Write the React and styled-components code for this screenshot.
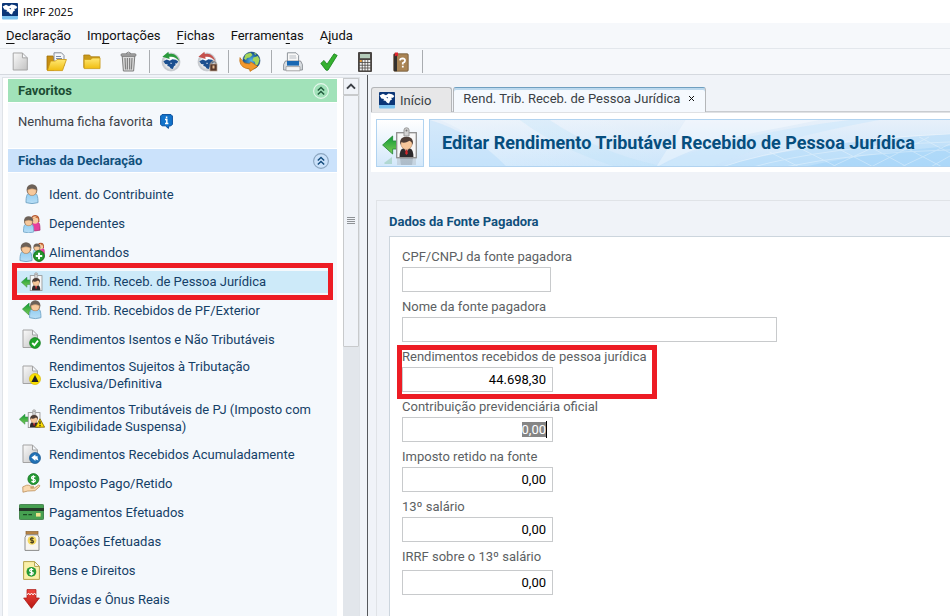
import { useEffect, useRef } from "react";
import styled, { createGlobalStyle, css } from "styled-components";

function SharedDefs() {
  return (
    <HiddenSvg aria-hidden="true">
      <defs>
        <linearGradient id="paper" x1="0" y1="0" x2="1" y2="1">
          <stop offset="0" stopColor="#fafafa" />
          <stop offset="1" stopColor="#c2c2c2" />
        </linearGradient>
        <linearGradient id="gold" x1="0" y1="0" x2="0" y2="1">
          <stop offset="0" stopColor="#ffe873" />
          <stop offset="1" stopColor="#f0bd10" />
        </linearGradient>
        <linearGradient id="leaf" x1="0" y1="0" x2="0" y2="1">
          <stop offset="0" stopColor="#0b9a35" />
          <stop offset="1" stopColor="#7fcb55" />
        </linearGradient>
        <linearGradient id="shirt" x1="0" y1="0" x2="0" y2="1">
          <stop offset="0" stopColor="#8fcdf3" />
          <stop offset="1" stopColor="#b9def5" />
        </linearGradient>
        <linearGradient id="ruby" x1="0" y1="0" x2="0" y2="1">
          <stop offset="0" stopColor="#f0483f" />
          <stop offset="1" stopColor="#b81712" />
        </linearGradient>
        <radialGradient id="disc">
          <stop offset="0.5" stopColor="#fff" />
          <stop offset="1" stopColor="#b9bdc2" />
        </radialGradient>
        <radialGradient id="ocean">
          <stop offset="0" stopColor="#55b5ec" />
          <stop offset="1" stopColor="#124a86" />
        </radialGradient>
        <linearGradient id="bannerBase" x1="0" y1="0" x2="0" y2="1">
          <stop offset="0" stopColor="#e7f0fa" />
          <stop offset="1" stopColor="#c8e4fb" />
        </linearGradient>
        <linearGradient id="bannerRay" x1="0" y1="0" x2="1" y2="0">
          <stop offset="0" stopColor="#fff" stopOpacity="0.7" />
          <stop offset="1" stopColor="#fff" stopOpacity="0.1" />
        </linearGradient>
      </defs>
    </HiddenSvg>
  );
}

/* ---- pieces shared by several icons ---- */

const Bird = ({ fill = "#fff" }) => (
  <path
    d="M0.6 3.2 L4 1.4 L7 2.8 L9.6 1.2 L13 1.8 L15.4 3.6 L14 5.4 L12.2 5.4 L13 7 L11.2 8.2 L10 11 L8 10.4 L6.4 8.4 L4.4 8 L5 6.6 L2.4 6 Z M7.4 5.2 L8.4 6 L9 5.2 L8.2 4.6 Z"
    fill={fill}
    fillRule="evenodd"
  />
);

const Person = () => (
  <g>
    <path d="M1 18.6 C1 12 2 9.5 4.6 9 H9.4 C12 9.5 13 12 13 18.6 Q7 20.6 1 18.6Z" fill="url(#shirt)" stroke="#77a9c9" />
    <ellipse cx="7" cy="5.9" rx="5.4" ry="5.7" fill="#6c6158" />
    <path d="M2.6 6 Q7 3.6 11.4 6 Q11.4 11.4 7 11.4 Q2.6 11.4 2.6 6Z" fill="#f7c99c" stroke="#c08f62" strokeWidth="0.5" />
  </g>
);

const Woman = () => (
  <g>
    <path d="M2 18 C2 11 3 9 5.5 9 H9 C12 9 12.5 12 12.5 18 Q7 19.6 2 18Z" fill="#e6409c" stroke="#a12a6c" strokeWidth="0.7" />
    <path d="M2.4 9 Q1.5 1 7 1 Q12.5 1 11.8 9Z" fill="#b2522c" />
    <ellipse cx="7" cy="6.6" rx="3.6" ry="4.2" fill="#f8cb9f" />
    <path d="M3.4 5.5 Q7 5 9 2.6 Q10.8 4 10.7 5.6 Q8 3 3.4 5.5Z" fill="#c76a38" />
  </g>
);

const LeftArrow = () => (
  <path d="M0.5 8 L8.5 0.8 V4.8 H15 V11.2 H8.5 V15.2 Z" fill="url(#leaf)" stroke="#278a3b" strokeWidth="0.7" />
);

const BadgeMan = () => (
  <g>
    <rect x="0.7" y="5.7" width="19.6" height="25" fill="#f7f7f7" stroke="#8e8e8e" strokeWidth="1.3" />
    <path d="M8 9 V3 Q8 0.8 10.5 0.8 Q13 0.8 13 3 V9 Z" fill="#d3d3d3" stroke="#999" />
    <circle cx="10.5" cy="3.4" r="1" fill="#777" />
    <path d="M3.6 30 Q3.6 22.5 7 21.6 H14 Q17.4 22.5 17.4 30 Z" fill="#2d2a2d" />
    <path d="M8.4 21.4 L10.5 25 L12.6 21.4Z" fill="#fff" />
    <path d="M9.8 22.4 H11.2 L11.8 26.4 L10.5 28 L9.2 26.4Z" fill="#d5252b" />
    <ellipse cx="10.5" cy="16.6" rx="5.6" ry="6" fill="#f6c79b" stroke="#9c6f49" strokeWidth="0.5" />
    <path d="M4 18 Q3 9.8 10.5 9.8 Q18 9.8 17 18 Q16 14.6 13.6 13.8 Q8 17 5.4 15 Z" fill="#4d3d36" />
  </g>
);

const Paper = () => (
  <path d="M1 1 H10.5 L15.5 6 V18.5 H1 Z M10.5 1 V6 H15.5" fill="url(#paper)" stroke="#a3a3a3" strokeLinejoin="round" />
);

const Warning = () => (
  <g>
    <path d="M5 0.8 L9.6 9.2 H0.4 Z" fill="#ffe200" stroke="#7a5f00" strokeWidth="0.8" strokeLinejoin="round" />
    <path d="M5 3.2 V6.2 M5 7 V8.2" stroke="#222" strokeWidth="1.2" />
  </g>
);

const Dollar = ({ color = "#fff" }) => (
  <path
    d="M6.2 2.6 Q3 1.2 2.2 3 Q1.8 4.4 4 4.8 Q6.6 5.4 6 7 Q5 8.4 2 7.2 M4.1 0.8 V9"
    fill="none"
    stroke={color}
    strokeWidth="1.3"
  />
);

/* ---- application icons ---- */

const LogoIcon = () => (
  <svg width="16" height="17" viewBox="0 0 16 17">
    <rect width="16" height="13.5" rx="1" fill="#0b3677" />
    <g transform="translate(0 0.4)"><Bird /></g>
    <rect y="13" width="16" height="3.4" rx="1" fill="#7cc2ee" />
  </svg>
);

const NewIcon = () => (
  <svg width="17" height="19" viewBox="0 0 17 19.5"><Paper /></svg>
);

const OpenIcon = () => (
  <svg width="21" height="20" viewBox="0 0 21 20">
    <path d="M1 4 H7 L8 6 V18 H1Z" fill="#c78e12" stroke="#a06e0a" strokeWidth="0.8" />
    <path d="M8 0.8 H15.5 L18 3.5 V14 H8 Z" fill="#f5f7fa" stroke="#858c98" />
    <path d="M10 4.5 H15 M10 6.5 H16" stroke="#7c8ba5" />
    <path d="M4.6 9 H9.5 L11 7.5 H20.4 L16.5 18.6 H1.4 Z" fill="url(#gold)" stroke="#c9930d" strokeWidth="0.8" />
  </svg>
);

const FolderIcon = () => (
  <svg width="18" height="17" viewBox="0 0 18 17">
    <path d="M0.8 2 H6.6 L8 3.8 H16.6 V14.6 H0.8 Z" fill="#c99a1b" stroke="#a97a0c" strokeWidth="0.8" />
    <path d="M1.2 6.4 H8 L9.4 5 H17 V15.6 H1.2 Z" fill="url(#gold)" stroke="#cd9d14" strokeWidth="0.8" />
  </svg>
);

const TrashIcon = () => (
  <svg width="17" height="21" viewBox="0 0 17 21">
    <path d="M2.2 5 H14.8 L13.6 20 H3.4 Z" fill="#dadada" stroke="#7d7d7d" />
    <path d="M5 7 L5.6 18.5 M7.4 7 V18.5 M9.6 7 V18.5 M12 7 L11.4 18.5" stroke="#828282" strokeWidth="1.2" />
    <rect x="1" y="2.8" width="15" height="2.4" rx="1" fill="#a7a7a7" stroke="#6c6c6c" strokeWidth="0.7" />
    <path d="M6 2.6 Q8.5 -0.4 11 2.6" fill="none" stroke="#777" />
  </svg>
);

const RestoreIcon = ({ arrow, locked }) => (
  <svg width="21" height="21" viewBox="0 0 21 21">
    <circle cx="10" cy="11" r="9" fill="url(#disc)" stroke="#c6cacf" strokeWidth="0.8" />
    <g transform="translate(1.8 7)"><Bird fill="#1b4f8f" /></g>
    <path d="M1.4 5.8 L7.4 0.8 L7.8 3 Q15.4 1 18.6 10.4 Q14.4 4.8 8.2 5.8 L8.6 8 Z" fill={arrow} />
    {locked && (
      <g>
        <path d="M14 14 V12 Q16.5 9 19 12 V14" fill="none" stroke="#8a8a8a" strokeWidth="1.3" />
        <rect x="13" y="13" width="7" height="7" fill="#593a2c" stroke="#bba38f" strokeWidth="0.7" />
        <rect x="15.5" y="14.5" width="2" height="3" fill="#e4b88f" />
      </g>
    )}
  </svg>
);

const GlobeIcon = () => (
  <svg width="22" height="21" viewBox="0 0 22 21">
    <circle cx="12.4" cy="9.6" r="8.6" fill="url(#ocean)" stroke="#1e4f7d" strokeWidth="0.6" />
    <path d="M6.5 3.6 Q9 1.6 12 2 L13.5 4 L10.8 6.4 L8 7 L7 9 L5 7.8Z M14.4 6.6 L18.8 5 L20.6 8.6 L19 13.4 L16.6 14.6 L15.8 10.8 L13.4 9.4Z M15 1.6 L17.6 3 L16 4Z" fill="#a6d65a" />
    <path d="M1 6.6 L2.6 9 Q4.6 12.8 10.6 13 L11.6 10.8 L18.6 15.4 L11 20.4 L10.6 18 Q1.6 17.2 0.8 10Z" fill="#f2982c" stroke="#c06f10" strokeWidth="0.7" />
  </svg>
);

const PrinterIcon = () => (
  <svg width="20" height="20" viewBox="0 0 20 20">
    <path d="M4.4 0.8 H13 L15.6 3.4 V10 H4.4Z" fill="#f8f8f8" stroke="#8e949b" />
    <path d="M6.4 4 H13 M6.4 6 H13.4" stroke="#b7bcc3" />
    <path d="M2.4 9 H17.6 L19.4 12.5 V18 H0.6 V12.5Z" fill="#d9dde1" stroke="#7a7f85" strokeWidth="0.8" />
    <path d="M4 9 H16 V13.6 H4Z" fill="#1968b3" />
    <path d="M3 14.6 H17 V18.8 H3Z" fill="#f4f4f4" stroke="#9a9a9a" strokeWidth="0.8" />
  </svg>
);

const CheckIcon = () => (
  <svg width="18" height="18" viewBox="0 0 18 18">
    <path d="M0.8 10.4 L4 7.4 L7 11.2 L14 0.8 L17.2 2.4 L8 17.2 H6 Z" fill="#35b12f" stroke="#18811c" strokeWidth="0.8" strokeLinejoin="round" />
  </svg>
);

const CalculatorIcon = () => (
  <svg width="14" height="20" viewBox="0 0 14 20">
    <rect width="14" height="20" rx="1" fill="#4a4643" />
    <rect x="2" y="2" width="10" height="4.2" fill="#b5ccba" />
    {[8, 10.8, 13.6, 16.4].map((y) =>
      [1.8, 4.6, 7.4, 10.2].map((x) => (
        <rect key={`${x}-${y}`} x={x} y={y} width="2" height="2" fill={x < 2 && y === 8 ? "#f0a23a" : "#f2f2f2"} />
      ))
    )}
  </svg>
);

const HelpBookIcon = () => (
  <svg width="16" height="20" viewBox="0 0 16 20">
    <rect x="0.8" y="1.8" width="14.4" height="17.4" rx="1" fill="#a98454" stroke="#6f5433" strokeWidth="0.8" />
    <rect x="0.8" y="1.8" width="3.2" height="17.4" fill="#34302d" />
    <path d="M1.8 0.4 H5 V4.6 L3.4 3.4 L1.8 4.6Z" fill="#e1262d" />
    <path d="M7 8.4 Q7.2 6.4 9.6 6.4 Q12.2 6.6 12 8.8 Q11.8 10.2 9.8 11 V12.6 M9.8 13.8 V15.6" fill="none" stroke="#fff" strokeWidth="1.8" />
  </svg>
);

const InfoIcon = () => (
  <svg width="13" height="15" viewBox="0 0 13 15">
    <path d="M2 0.6 H11 L12.4 2 V10.4 L11 11.8 H9 L8.4 14.4 L5.4 11.8 H2 L0.6 10.4 V2Z" fill="#1173cb" stroke="#0a4f9c" />
    <path d="M6.6 2.4 V4.2 M5 5.6 H6.8 V9 M5 9.6 H8.4" fill="none" stroke="#fff" strokeWidth="1.5" />
  </svg>
);

const CollapseIcon = ({ ring, color }) => (
  <svg width="16" height="16" viewBox="0 0 16 16" fill="none">
    <circle cx="8" cy="8" r="7.4" stroke={ring} strokeWidth="1.1" />
    <path d="M4.8 7.6 L8 4.4 L11.2 7.6 M4.8 11.6 L8 8.4 L11.2 11.6" stroke={color} strokeWidth="1.4" />
  </svg>
);

/* ---- icons of the list of forms ---- */

const PersonIcon = () => (
  <svg width="14" height="20" viewBox="0 0 14 20"><Person /></svg>
);

const FamilyIcon = () => (
  <svg width="18" height="19" viewBox="0 0 18 19">
    <g transform="translate(5.8 0) scale(0.9)"><Woman /></g>
    <g transform="translate(-0.4 2) scale(0.86)"><Person /></g>
  </svg>
);

const AlimonyIcon = () => (
  <svg width="26" height="20" viewBox="0 0 26 20">
    <g transform="translate(17 0) scale(0.68)"><Woman /></g>
    <g transform="translate(13.4 1.4) scale(0.64)"><Person /></g>
    <Person />
    <circle cx="20" cy="14" r="5.4" fill="#25962c" stroke="#12701a" />
    <path d="M20 10.8 V17.2 M16.8 14 H23.2" stroke="#fff" strokeWidth="2" />
  </svg>
);

const CompanyIcon = ({ warn }) => (
  <svg width={warn ? 26 : 22} height="19" viewBox={warn ? "0 0 26 19" : "0 0 22 19"}>
    <g transform="translate(0 4.6) scale(0.7)"><LeftArrow /></g>
    <g transform="translate(8.8 0.2) scale(0.6)"><BadgeMan /></g>
    {warn && <g transform="translate(16 9)"><Warning /></g>}
  </svg>
);

const ForeignIcon = () => (
  <svg width="20" height="20" viewBox="0 0 20 20">
    <g transform="translate(0 2.4) scale(0.84)"><LeftArrow /></g>
    <g transform="translate(6.6 0) scale(0.95)"><Person /></g>
  </svg>
);

const PaperIcon = ({ mark }) => (
  <svg width="19" height="20" viewBox="0 0 19 20">
    <Paper />
    {mark === "check" && (
      <g>
        <circle cx="13" cy="14" r="5.4" fill="#1fa32a" stroke="#107819" strokeWidth="0.7" />
        <path d="M10.2 14 L12.4 16.2 L16 11.6" fill="none" stroke="#fff" strokeWidth="1.8" />
      </g>
    )}
    {mark === "alert" && (
      <g>
        <circle cx="13" cy="14" r="5.5" fill="#fbe100" stroke="#d9b800" strokeWidth="0.7" />
        <path d="M13 10 L16.6 17 H9.4Z" fill="#222" />
      </g>
    )}
    {mark === "back" && (
      <g>
        <circle cx="13" cy="14" r="5.5" fill="#2272b5" stroke="#14558f" strokeWidth="0.7" />
        <path d="M9.4 13.6 L13.4 10.4 V12.2 H15.6 V14 L16.4 16.6 L13.4 15.2 V17Z" fill="#fff" />
      </g>
    )}
  </svg>
);

const PaidIcon = () => (
  <svg width="19" height="20" viewBox="0 0 20 21">
    <circle cx="12" cy="6.4" r="5.8" fill="#259a35" stroke="#12701f" strokeWidth="0.8" />
    <g transform="translate(7.9 1.6)"><Dollar /></g>
    <path d="M0.8 14.6 L5 12.8 Q7 12.4 9 13.8 L12 14 Q13 15 11.6 15.6 H9 L13 15.8 L17.6 12.6 Q19.6 13 18.4 14.4 L13.6 18.6 L6 19 L1 20.2Z" fill="#f9d9af" stroke="#b98b55" strokeWidth="0.8" />
  </svg>
);

const CardIcon = () => (
  <svg width="25" height="16" viewBox="0 0 25 16">
    <rect x="0.4" y="0.4" width="24.2" height="15.2" rx="1" fill="#46a051" stroke="#2c6f35" strokeWidth="0.8" />
    <rect y="4" width="25" height="3" fill="#243a28" />
    <path d="M4 10.6 H8 M9.4 10.6 H13" stroke="#1c4d25" strokeWidth="1.2" />
    <rect x="17" y="9" width="4.6" height="3.6" fill="#efe38b" />
  </svg>
);

const JarIcon = () => (
  <svg width="16" height="20" viewBox="0 0 16 20">
    <rect x="2" y="0.6" width="12" height="3" fill="#b58345" stroke="#8a602c" strokeWidth="0.7" />
    <path d="M2.4 3.8 H13.6 L15 6.4 V19.4 H1 V6.4Z" fill="#f7f5f0" stroke="#8b8b8b" />
    <circle cx="8" cy="9.4" r="4.4" fill="#f3d860" />
    <g transform="translate(4.6 5.4) scale(0.82)"><Dollar color="#4d4320" /></g>
  </svg>
);

const AssetsIcon = () => (
  <svg width="17" height="19" viewBox="0 0 17 19">
    <path d="M0.6 0.6 H11.6 L16.4 5.4 V18.4 H0.6 Z M11.6 0.6 V5.4 H16.4" fill="#faf0a8" stroke="#b4a34b" />
    <circle cx="8.4" cy="10.8" r="4.9" fill="#259a35" />
    <g transform="translate(4.7 6.4) scale(0.9)"><Dollar /></g>
  </svg>
);

const DebtIcon = () => (
  <svg width="17" height="20" viewBox="0 0 17 20">
    <path d="M4 0.6 H13 V9 H16.4 L8.5 19.4 L0.6 9 H4Z" fill="url(#ruby)" stroke="#a51511" strokeWidth="0.7" />
    <path d="M4 6 L5.5 4 L7 6 L8.5 4 L10 6 L11.5 4 L13 6" fill="none" stroke="#fff" strokeWidth="0.9" />
  </svg>
);

const HeaderIcon = () => (
  <svg width="36" height="44" viewBox="0 0 36 44">
    <g transform="translate(0 14) scale(1.25)"><LeftArrow /></g>
    <g transform="translate(14 6)"><BadgeMan /></g>
    <g opacity="0.22">
      <path d="M2 42 L10 36 V43 H3Z" fill="#2f9b47" />
      <rect x="15" y="37" width="19" height="7" fill="#8d8d8d" />
      <path d="M18 37 H31 L30 44 H19Z" fill="#222" />
    </g>
  </svg>
);

const BannerArt = () => (
  <BannerSvg viewBox="0 0 521 48" preserveAspectRatio="xMinYMin slice" aria-hidden="true">
    <rect width="2000" height="48" fill="url(#bannerBase)" />
    <path d="M0 0 Q45 14 78 48 H0Z" fill="#bfdffa" opacity="0.45" />
    <path d="M78 48 Q45 14 10 0 H255 L226 48Z" fill="url(#bannerRay)" opacity="0.35" />
    <path d="M120 0 Q170 34 240 48 H190 Q130 30 90 0Z" fill="#b3def9" opacity="0.25" />
    <path d="M256 0 L226 48 Q270 22 350 8 L390 0Z" fill="#fff" opacity="0.35" />
    <path d="M226 48 Q290 16 420 0 H450 Q340 20 280 48Z" fill="#cde8fb" opacity="0.6" />
    <path d="M290 48 Q360 24 521 14 V48Z" fill="#a9d6f9" opacity="0.45" />
    <path d="M370 48 Q430 34 521 26 V48Z" fill="#93caf6" opacity="0.35" />
    <g fill="none" stroke="#fff" opacity="0.32">
      <path d="M290 48 Q370 20 521 14 M320 48 Q400 26 521 22 M350 48 Q430 32 521 30" />
      <path d="M340 32 L372 48 M370 28 L410 48 M400 24 L446 48 M430 21 L480 48 M460 19 L515 48 M490 17 L521 33" />
      <path d="M440 48 L500 17 M470 48 L521 24 M400 48 L460 20 M500 48 L521 36" />
    </g>
  </BannerSvg>
);

const menus = [
  ["", "D", "eclaração"],
  ["Im", "p", "ortações"],
  ["", "F", "ichas"],
  ["Ferramen", "t", "as"],
  ["A", "j", "uda"],
];

const toolGroups = [
  [
    { name: "Nova declaração", icon: <NewIcon /> },
    { name: "Abrir declaração", icon: <OpenIcon /> },
    { name: "Pasta", icon: <FolderIcon /> },
    { name: "Excluir", icon: <TrashIcon /> },
  ],
  [
    { name: "Recuperar", icon: <RestoreIcon arrow="#2a9a3c" /> },
    { name: "Bloquear", icon: <RestoreIcon arrow="#c5514d" locked /> },
  ],
  [{ name: "Transmitir", icon: <GlobeIcon /> }],
  [
    { name: "Imprimir", icon: <PrinterIcon /> },
    { name: "Verificar pendências", icon: <CheckIcon /> },
    { name: "Calculadora", icon: <CalculatorIcon /> },
    { name: "Manual", icon: <HelpBookIcon /> },
  ],
];

const sheets = [
  { label: "Ident. do Contribuinte", icon: <PersonIcon /> },
  { label: "Dependentes", icon: <FamilyIcon /> },
  { label: "Alimentandos", icon: <AlimonyIcon /> },
  { label: "Rend. Trib. Receb. de Pessoa Jurídica", icon: <CompanyIcon />, active: true },
  { label: "Rend. Trib. Recebidos de PF/Exterior", icon: <ForeignIcon /> },
  { label: "Rendimentos Isentos e Não Tributáveis", icon: <PaperIcon mark="check" /> },
  { label: "Rendimentos Sujeitos à Tributação Exclusiva/Definitiva", icon: <PaperIcon mark="alert" /> },
  { label: "Rendimentos Tributáveis de PJ (Imposto com Exigibilidade Suspensa)", icon: <CompanyIcon warn /> },
  { label: "Rendimentos Recebidos Acumuladamente", icon: <PaperIcon mark="back" /> },
  { label: "Imposto Pago/Retido", icon: <PaidIcon /> },
  { label: "Pagamentos Efetuados", icon: <CardIcon /> },
  { label: "Doações Efetuadas", icon: <JarIcon /> },
  { label: "Bens e Direitos", icon: <AssetsIcon /> },
  { label: "Dívidas e Ônus Reais", icon: <DebtIcon /> },
];

const fields = [
  { id: "cpf", label: "CPF/CNPJ da fonte pagadora", value: "", width: 149 },
  { id: "nome", label: "Nome da fonte pagadora", value: "", width: 375 },
  { id: "rendimentos", label: "Rendimentos recebidos de pessoa jurídica", value: "44.698,30", marked: true },
  { id: "previdencia", label: "Contribuição previdenciária oficial", value: "0,00", selected: true },
  { id: "imposto", label: "Imposto retido na fonte", value: "0,00" },
  { id: "decimo", label: "13º salário", value: "0,00" },
  { id: "irrf", label: "IRRF sobre o 13º salário", value: "0,00", loose: true },
];

function FormField({ field }) {
  const ref = useRef(null);

  useEffect(() => {
    if (field.selected) {
      ref.current.focus();
      ref.current.select();
    }
  }, [field.selected]);

  return (
    <Field $loose={field.loose}>
      <label htmlFor={field.id}>{field.label}</label>
      <InputWrap $width={field.width}>
        <Input id={field.id} ref={ref} type="text" defaultValue={field.value} />
        {field.selected && <Caret />}
      </InputWrap>
      {field.marked && <FieldMark />}
    </Field>
  );
}

function App() {
  return (
    <>
      <GlobalStyle />
      <SharedDefs />
      <Window>
        <TitleBar>
          <LogoIcon />
          <span>IRPF 2025</span>
        </TitleBar>
        <MenuBar>
          {menus.map(([before, key, after]) => (
            <MenuButton key={before + key + after}>
              {before}<u>{key}</u>{after}
            </MenuButton>
          ))}
        </MenuBar>
        <Toolbar>
          {toolGroups.map((group, i) => (
            <ToolGroup key={i}>
              {group.map((tool) => (
                <ToolButton key={tool.name} aria-label={tool.name}>{tool.icon}</ToolButton>
              ))}
            </ToolGroup>
          ))}
        </Toolbar>

        <Body>
          <Sidebar>
            <Panels>
              <PanelHeader $green>
                <h2>Favoritos</h2>
                <CollapseButton aria-label="Recolher favoritos">
                  <CollapseIcon ring="#e4f7eb" color="#1f5a3b" />
                </CollapseButton>
              </PanelHeader>
              <Favorites>
                Nenhuma ficha favorita <InfoIcon />
              </Favorites>
              <PanelHeader>
                <h2>Fichas da Declaração</h2>
                <CollapseButton aria-label="Recolher fichas">
                  <CollapseIcon ring="#8ba5bf" color="#134b7c" />
                </CollapseButton>
              </PanelHeader>
              <SheetList>
                {sheets.map((sheet) => (
                  <SheetItem key={sheet.label}>
                    <SheetButton $active={sheet.active}>
                      <SheetIcon>{sheet.icon}</SheetIcon>
                      <span>{sheet.label}</span>
                    </SheetButton>
                    {sheet.active && <SheetMark />}
                  </SheetItem>
                ))}
              </SheetList>
            </Panels>
            <ScrollTrack>
              <ScrollUp aria-label="Rolar para cima">
                <svg width="10" height="7" viewBox="0 0 10 7">
                  <path d="M1 5.6 L5 1.6 L9 5.6" fill="none" stroke="#3b3f45" strokeWidth="2" />
                </svg>
              </ScrollUp>
              <ScrollThumb>
                <svg width="8" height="8" viewBox="0 0 8 8">
                  <path d="M0 0.5 H8 M0 2.5 H8 M0 4.5 H8 M0 6.5 H8" stroke="#8f9296" />
                </svg>
              </ScrollThumb>
            </ScrollTrack>
          </Sidebar>

          <Main>
            <Tabs>
              <Tab><LogoIcon />Início</Tab>
              <Tab $active>
                Rend. Trib. Receb. de Pessoa Jurídica
                <svg width="7" height="7" viewBox="0 0 7 7">
                  <path d="M1 1 L6 6 M6 1 L1 6" stroke="#111" />
                </svg>
              </Tab>
            </Tabs>
            <PageHeader>
              <HeaderBox><HeaderIcon /></HeaderBox>
              <Banner>
                <BannerArt />
                <h1>Editar Rendimento Tributável Recebido de Pessoa Jurídica</h1>
              </Banner>
            </PageHeader>
            <Section>
              <h2>Dados da Fonte Pagadora</h2>
              <Form>
                {fields.map((field) => (
                  <FormField key={field.id} field={field} />
                ))}
              </Form>
            </Section>
          </Main>
        </Body>
      </Window>
    </>
  );
}

const GlobalStyle = createGlobalStyle`
  * {
    box-sizing: border-box;
  }
  body {
    margin: 0;
    overflow: hidden;
    font-family: Roboto, "Liberation Sans", sans-serif;
    font-size: 13px;
    background: #f0f3f8;
  }
  h1, h2, ul {
    margin: 0;
    padding: 0;
  }
  ul {
    list-style: none;
  }
  svg {
    flex-shrink: 0;
  }
  button, input {
    font: inherit;
  }
  button {
    color: inherit;
    background: none;
    border: none;
    padding: 0;
    margin: 0;
  }
`;

const HiddenSvg = styled.svg`
  position: absolute;
  width: 0;
  height: 0;
`;

const Window = styled.div`
  display: flex;
  flex-direction: column;
  height: 100vh;
`;

const TitleBar = styled.header`
  display: flex;
  align-items: center;
  gap: 5px;
  height: 23px;
  padding-left: 2px;
  background: #fff;
  color: #000;
  font-family: "Open Sans", sans-serif;
  font-size: 11px;
`;

const MenuBar = styled.nav`
  display: flex;
  gap: 16px;
  height: 26px;
  padding: 0 6px;
  background: #f6f8fb;
  border-bottom: 1px solid #e3e7ec;
`;

const MenuButton = styled.button`
  color: #111;
  u {
    text-underline-offset: 3px;
  }
`;

const Toolbar = styled.div`
  display: flex;
  height: 26px;
  padding-left: 2px;
  background: #f6f8fb;
  border-bottom: 1px solid #d5d9df;
`;

const ToolGroup = styled.div`
  display: flex;
  align-items: center;
  &::after {
    content: "";
    width: 1px;
    height: 23px;
    margin: 0 3px;
    background: #a9acb0;
  }
`;

const ToolButton = styled.button`
  display: flex;
  align-items: center;
  justify-content: center;
  width: 36px;
  height: 24px;
`;

const Body = styled.div`
  display: flex;
  flex: 1;
  min-height: 0;
`;

const Sidebar = styled.aside`
  display: flex;
  flex-shrink: 0;
  gap: 6px;
  width: 358px;
  margin: 2px 7px 0 2px;
  padding-left: 5px;
  background: #fff;
  border: 1px solid #dfe3e8;
  border-bottom: none;
  overflow: hidden;
`;

const Panels = styled.div`
  flex: 1;
  padding-top: 1px;
`;

const PanelHeader = styled.div`
  display: flex;
  align-items: center;
  justify-content: space-between;
  height: 23px;
  padding: 0 8px 0 10px;
  background: ${(p) => (p.$green ? "#a1e2b9" : "#cbe2fb")};
  color: ${(p) => (p.$green ? "#1c4d33" : "#10507c")};
  h2 {
    font-size: 13px;
    font-weight: 700;
  }
`;

const CollapseButton = styled.button`
  display: flex;
`;

const Favorites = styled.div`
  display: flex;
  align-items: center;
  gap: 7px;
  height: 45px;
  margin: 1px 0;
  padding: 0 10px 8px;
  color: #3c4248;
  background: #f4f8fc;
`;

const SheetList = styled.ul`
  height: 100%;
  margin-top: 1px;
  padding: 7px 9px 0;
  background: #f4f8fc;
`;

const SheetItem = styled.li`
  position: relative;
`;

const SheetButton = styled.button`
  display: flex;
  align-items: center;
  gap: 3px;
  width: 100%;
  min-height: 29px;
  padding: 4px 0 5px;
  color: #154067;
  line-height: 17px;
  text-align: left;
  ${(p) =>
    p.$active &&
    css`
      background: linear-gradient(#cdeaf9, #cdeaf9) center / 100% 22px no-repeat;
    `}
`;

const SheetIcon = styled.span`
  display: flex;
  justify-content: center;
  flex-shrink: 0;
  width: 29px;
`;

const redMark = css`
  position: absolute;
  border: 5px solid #ed1c24;
  pointer-events: none;
`;

const SheetMark = styled.span`
  ${redMark}
  inset: -4px -5px;
`;

const ScrollTrack = styled.div`
  width: 16px;
  background: #e2e6eb;
`;

const ScrollUp = styled.button`
  display: flex;
  align-items: center;
  justify-content: center;
  width: 100%;
  height: 17px;
  background: #f0f3f8;
  border: 1px solid #c8cacc;
`;

const ScrollThumb = styled.div`
  display: flex;
  align-items: center;
  justify-content: center;
  height: 252px;
  background: #f0f3f8;
  border: 1px solid #c8cacc;
  border-radius: 1px;
`;

const Main = styled.main`
  display: flex;
  flex-direction: column;
  flex: 1;
  min-width: 0;
  padding: 12px 0 0 3px;
  border-left: 1px solid #55585c;
  background: #f0f3f8;
`;

const Tabs = styled.div`
  display: flex;
  flex-shrink: 0;
  gap: 1px;
  height: 26px;
  border-bottom: 1px solid #dfe1e4;
  box-shadow: inset 0 -1px #c9ccd0;
`;

const Tab = styled.button`
  display: flex;
  align-items: center;
  gap: 5px;
  padding: 1px 20px 0 7px;
  color: #3a3f45;
  background: #e7e7e8;
  border: 1px solid #b4b6b9;
  border-bottom: none;
  border-radius: 3px 3px 0 0;
  ${(p) =>
    p.$active &&
    css`
      gap: 8px;
      padding: 0 10px 3px 9px;
      background: #f5f9fe;
      border-top-color: #6f9fc0;
      box-shadow: inset 0 2px #bcd9ee;
    `}
`;

const PageHeader = styled.div`
  display: flex;
  flex-shrink: 0;
  gap: 5px;
  padding: 6px 0 5px 5px;
  background: #fff;
`;

const HeaderBox = styled.div`
  display: flex;
  align-items: center;
  justify-content: center;
  width: 48px;
  height: 48px;
  background: linear-gradient(#fff, #d3e8fa);
  border: 1px solid #b1d3f0;
`;

const Banner = styled.div`
  position: relative;
  display: flex;
  align-items: center;
  flex: 1;
  min-width: 0;
  padding: 0 0 2px 12px;
  border: 1px solid #b1d3f0;
  border-right: none;
  overflow: hidden;
  h1 {
    position: relative;
    color: #064e7e;
    font-size: 18px;
    font-weight: 700;
    white-space: nowrap;
  }
`;

const BannerSvg = styled.svg`
  position: absolute;
  inset: 0;
  width: 100%;
  height: 100%;
`;

const Section = styled.section`
  display: flex;
  flex-direction: column;
  flex: 1;
  margin: 28px 0 0 5px;
  padding: 13px 0 0 12px;
  border: 1px solid #e0e3e7;
  border-width: 1px 0 0 1px;
  h2 {
    color: #10507c;
    font-size: 13px;
    line-height: 16px;
    margin-bottom: 6px;
  }
`;

const Form = styled.form`
  display: flex;
  flex-direction: column;
  align-items: flex-start;
  gap: 7px;
  flex: 1;
  padding: 12px 12px 0;
  background: #fff;
  border: 1px solid #ccd5dd;
  border-width: 1px 0 0 1px;
`;

const Field = styled.div`
  position: relative;
  display: flex;
  flex-direction: column;
  gap: ${(p) => (p.$loose ? 5 : 2)}px;
  color: #5c5f63;
  line-height: 16px;
`;

const InputWrap = styled.div`
  position: relative;
  width: ${(p) => p.$width || 151}px;
`;

const Input = styled.input`
  display: block;
  width: 100%;
  height: 25px;
  padding: 0 6px;
  color: #000;
  line-height: 17px;
  text-align: right;
  background: #fff;
  border: 1px solid #c8cacc;
  border-radius: 0;
  outline: none;
  &::selection {
    color: #fff;
    background: rgba(132, 132, 132, 0.99);
  }
`;

const Caret = styled.span`
  position: absolute;
  top: 4px;
  right: 6px;
  width: 1px;
  height: 17px;
  background: #000;
`;

const FieldMark = styled.span`
  ${redMark}
  inset: -4px -10px -7px -5px;
`;

export default App;
